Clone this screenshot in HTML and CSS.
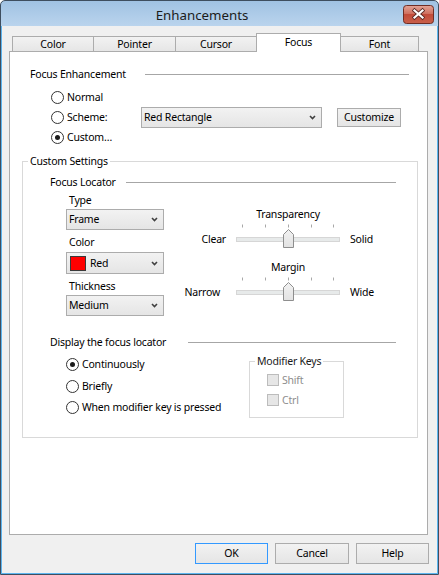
FILE: index.html
```html
<!DOCTYPE html>
<html>
<head>
<meta charset="utf-8">
<title>Enhancements</title>
<link rel="stylesheet" href="styles.css">
</head>
<body>
<div class="window">
  <div class="titlebar">
    <div class="title">Enhancements</div>
    <div class="close">
      <svg width="31" height="19" viewBox="0 0 31 19">
        <defs>
          <linearGradient id="cg" x1="0" y1="0" x2="0" y2="1">
            <stop offset="0" stop-color="#e3a497"/>
            <stop offset="0.45" stop-color="#d0705f"/>
            <stop offset="0.5" stop-color="#c24b39"/>
            <stop offset="1" stop-color="#c9604b"/>
          </linearGradient>
        </defs>
        <rect x="0.5" y="0.5" width="30" height="18" rx="3" fill="url(#cg)" stroke="#6e2d25"/>
        <path d="M11.5 5.5 L19.5 12.5 M19.5 5.5 L11.5 12.5" stroke="#5a2a24" stroke-width="3.8" stroke-linecap="square"/>
        <path d="M11.5 5.5 L19.5 12.5 M19.5 5.5 L11.5 12.5" stroke="#ffffff" stroke-width="2.2" stroke-linecap="square"/>
      </svg>
    </div>
  </div>
  <div class="client">
    <div class="tabs">
      <div class="tab t-color">Color</div>
      <div class="tab t-pointer">Pointer</div>
      <div class="tab t-cursor">Cursor</div>
      <div class="tab t-focus active">Focus</div>
      <div class="tab t-font">Font</div>
    </div>
    <div class="panel">
      <div class="hdr hdr-fe"><span>Focus Enhancement</span><span class="rule"></span></div>
      <div class="fe-rows">
        <div class="fe-row">
          <div class="opt fe-opt"><span class="radio"></span><span>Normal</span></div>
        </div>
        <div class="fe-row">
          <div class="opt fe-opt"><span class="radio"></span><span>Scheme:</span></div>
          <div class="combo combo-scheme"><span class="combo-text">Red Rectangle</span><svg class="chev" width="7" height="5" viewBox="0 0 7 5"><path d="M1 1 L3.5 3.5 L6 1" fill="none" stroke="#404040" stroke-width="1.6"/></svg></div>
          <div class="btn btn-customize">Customize</div>
        </div>
        <div class="fe-row">
          <div class="opt fe-opt"><span class="radio on"></span><span>Custom…</span></div>
        </div>
      </div>

      <fieldset class="group cs">
        <legend>Custom Settings</legend>
        <div class="cs-inner">
          <div class="hdr hdr-fl"><span>Focus Locator</span><span class="rule"></span></div>
          <div class="loc-cols">
            <div class="loc-left">
              <div class="flbl">Type</div>
              <div class="combo combo-sm"><span class="combo-text">Frame</span><svg class="chev" width="7" height="5" viewBox="0 0 7 5"><path d="M1 1 L3.5 3.5 L6 1" fill="none" stroke="#404040" stroke-width="1.6"/></svg></div>
              <div class="flbl flbl-next">Color</div>
              <div class="combo combo-color"><span class="swatch"></span><span class="combo-text">Red</span><svg class="chev" width="7" height="5" viewBox="0 0 7 5"><path d="M1 1 L3.5 3.5 L6 1" fill="none" stroke="#404040" stroke-width="1.6"/></svg></div>
              <div class="flbl flbl-next">Thickness</div>
              <div class="combo combo-sm"><span class="combo-text">Medium</span><svg class="chev" width="7" height="5" viewBox="0 0 7 5"><path d="M1 1 L3.5 3.5 L6 1" fill="none" stroke="#404040" stroke-width="1.6"/></svg></div>
            </div>
            <div class="loc-right">
              <div class="slider">
                <div class="s-title">Transparency</div>
                <div class="s-left">Clear</div>
                <svg class="s-svg" width="104" height="26" viewBox="0 0 104 26">
                  <defs>
                    <linearGradient id="tg1" x1="0" y1="0" x2="0" y2="1">
                      <stop offset="0" stop-color="#f2f2f2"/>
                      <stop offset="1" stop-color="#e2e2e2"/>
                    </linearGradient>
                  </defs>
                  <path d="M6.5 2.5v3M29.5 2.5v3M52.5 2.5v3M75.5 2.5v3M97.5 2.5v3" stroke="#a8a8a8"/>
                  <rect x="0.5" y="15.5" width="103" height="4" fill="#e7eaea" stroke="#d6d6d6"/>
                  <path d="M47.5 25.5 V12.5 L52.5 7.5 L57.5 12.5 V25.5 Z" fill="url(#tg1)" stroke="#8e8e8e"/>
                </svg>
                <div class="s-right">Solid</div>
              </div>
              <div class="slider">
                <div class="s-title">Margin</div>
                <div class="s-left narrow">Narrow</div>
                <svg class="s-svg" width="104" height="26" viewBox="0 0 104 26">
                  <defs>
                    <linearGradient id="tg2" x1="0" y1="0" x2="0" y2="1">
                      <stop offset="0" stop-color="#f2f2f2"/>
                      <stop offset="1" stop-color="#e2e2e2"/>
                    </linearGradient>
                  </defs>
                  <path d="M6.5 2.5v3M29.5 2.5v3M52.5 2.5v3M75.5 2.5v3M97.5 2.5v3" stroke="#a8a8a8"/>
                  <rect x="0.5" y="15.5" width="103" height="4" fill="#e7eaea" stroke="#d6d6d6"/>
                  <path d="M47.5 25.5 V12.5 L52.5 7.5 L57.5 12.5 V25.5 Z" fill="url(#tg2)" stroke="#8e8e8e"/>
                </svg>
                <div class="s-right">Wide</div>
              </div>
            </div>
          </div>

          <div class="hdr hdr-dl"><span>Display the focus locator</span><span class="rule"></span></div>
          <div class="dl-row">
            <div class="dl-opts">
              <div class="opt dl-opt"><span class="radio on"></span><span>Continuously</span></div>
              <div class="opt dl-opt dl-mid"><span class="radio"></span><span>Briefly</span></div>
              <div class="opt dl-opt"><span class="radio"></span><span>When modifier key is pressed</span></div>
            </div>
            <fieldset class="group mk">
              <legend>Modifier Keys</legend>
              <div class="mk-inner">
                <div class="chk-row"><span class="chk"></span><span>Shift</span></div>
                <div class="chk-row"><span class="chk"></span><span>Ctrl</span></div>
              </div>
            </fieldset>
          </div>
        </div>
      </fieldset>
    </div>
    <div class="buttons">
      <div class="btn dlg-btn default">OK</div>
      <div class="btn dlg-btn cancel">Cancel</div>
      <div class="btn dlg-btn">Help</div>
    </div>
  </div>
</div>
</body>
</html>
```

FILE: styles.css
```css
* { box-sizing: border-box; }

html, body {
  margin: 0;
  padding: 0;
  background: #ffffff;
}

body {
  font-family: "Noto Sans", "Open Sans", sans-serif;
  font-size: 10.5px;
  letter-spacing: -0.2px;
  line-height: 15px;
  color: #000000;
}

.window {
  width: 439px;
  height: 575px;
  border: 1px solid #3e4e5f;
  border-radius: 5px 5px 0 0;
  background: linear-gradient(#a0c2e3, #bad4ed 25px, #bad4ed);
  display: flex;
  flex-direction: column;
  overflow: hidden;
}

.titlebar {
  height: 25px;
  flex: none;
  display: flex;
  align-items: flex-start;
}

.title {
  flex: 1;
  text-align: center;
  font-size: 13.3px;
  letter-spacing: 0;
  line-height: 18px;
  padding-top: 5px;
  color: #1b1b1b;
}

.close {
  width: 31px;
  height: 19px;
  margin-top: 4px;
  margin-right: 4px;
  display: flex;
}

.client {
  flex: 1;
  background: #f0f0f0;
  border: 1px solid #5db5ef;
  border-top: none;
  display: flex;
  flex-direction: column;
}

/* tabs */
.tabs {
  height: 25px;
  flex: none;
  display: flex;
  align-items: flex-end;
  padding-left: 10px;
}

.tab {
  height: 15px;
  border: 1px solid #acacac;
  border-bottom: none;
  background: linear-gradient(#f2f2f2, #e6e6e6);
  display: flex;
  align-items: center;
  justify-content: center;
  margin-left: -1px;
}

.t-color { width: 82px; margin-left: 0; }
.t-pointer { width: 83px; }
.t-cursor { width: 82px; }
.t-focus { width: 85px; }
.t-font { width: 79px; }

.tab.active {
  height: 19px;
  margin-bottom: -1px;
  background: #ffffff;
  position: relative;
  z-index: 1;
  padding-bottom: 1px;
}

.panel {
  flex: none;
  height: 484px;
  margin: 0 9px 0 7px;
  border: 1px solid #acacac;
  background: #ffffff;
}

/* section headers */
.hdr {
  display: grid;
  align-items: center;
  height: 15px;
  white-space: nowrap;
}

.rule {
  display: block;
  height: 0;
  border-top: 1px solid #a6a6a6;
}

.hdr-fe {
  grid-template-columns: 115px 1fr;
  margin: 15px 18px 0 20px;
}

.hdr-fl { grid-template-columns: 76px 1fr; }
.hdr-dl { grid-template-columns: 138px 1fr; margin-top: 19px; }

/* option rows */
.fe-rows { margin: 5px 0 0 41px; }

.fe-row {
  height: 20px;
  display: flex;
  align-items: center;
}

.opt {
  display: flex;
  align-items: center;
  white-space: nowrap;
}

.fe-opt { width: 90px; }

.radio {
  flex: none;
  width: 13px;
  height: 13px;
  border: 1px solid #333333;
  border-radius: 50%;
  background: #ffffff;
  margin-right: 3px;
  display: flex;
  align-items: center;
  justify-content: center;
}

.radio.on::after {
  content: "";
  width: 5px;
  height: 5px;
  border-radius: 50%;
  background: #1a1a1a;
}

/* combos and buttons */
.combo {
  flex: none;
  display: flex;
  align-items: center;
  border: 1px solid #acacac;
  background: linear-gradient(#f2f2f2, #e5e5e5);
  padding: 0 5px 0 2px;
  white-space: nowrap;
}

.combo-text { flex: 1; }
.chev { flex: none; }

.combo-scheme { width: 181px; height: 21px; }
.combo-sm { width: 98px; height: 21px; margin-top: 1px; }

.combo-color {
  width: 98px;
  height: 22px;
  margin-top: 2px;
  padding-left: 3px;
}

.swatch {
  flex: none;
  width: 16px;
  height: 15px;
  background: #ff0000;
  border: 1px solid #3a3a3a;
  margin-right: 4px;
}

.btn {
  display: flex;
  align-items: center;
  justify-content: center;
  border: 1px solid #acacac;
  background: linear-gradient(#f2f2f2, #e5e5e5);
  white-space: nowrap;
}

.btn-customize {
  width: 64px;
  height: 19px;
  margin-left: 15px;
}

/* group boxes */
fieldset.group {
  margin: 0;
  padding: 0;
  border: 1px solid #d9d9d9;
  min-width: 0;
}

fieldset.group legend {
  padding: 0 2px;
  margin-left: 5px;
  line-height: 15px;
}

fieldset.cs { margin: 7px 9px 0 12px; }

.cs-inner { padding: 6px 21px 19px 27px; }

.loc-cols {
  display: flex;
  margin: 3px 0 0 16px;
}

.loc-left { width: 98px; flex: none; }

.flbl { padding-left: 3px; height: 15px; }
.flbl-next { margin-top: 5px; }

.loc-right {
  margin-left: 2px;
  padding-top: 13.5px;
}

.slider {
  display: grid;
  grid-template-columns: 60px 104px auto;
  grid-template-rows: 15px 26px;
  column-gap: 10px;
  margin-bottom: 12px;
  white-space: nowrap;
}

.s-title { grid-column: 2; grid-row: 1; text-align: center; }
.s-left { grid-column: 1; grid-row: 2; text-align: right; margin-top: 10px; }
.s-left.narrow { margin-right: 6px; }
.s-svg { grid-column: 2; grid-row: 2; display: block; }
.s-right { grid-column: 3; grid-row: 2; margin-top: 10px; }

.dl-row {
  display: flex;
  align-items: flex-start;
  margin: 4px 0 0 16px;
}

.dl-opts { width: 183px; flex: none; }
.dl-opt { height: 21px; }
.dl-mid { height: 22px; }

fieldset.mk { width: 95px; flex: none; }
fieldset.mk legend { color: #1a1a1a; }

.mk-inner { padding: 1px 0 7px 17px; }

.chk-row {
  height: 20px;
  display: flex;
  align-items: center;
  color: #8d8d8d;
}

.chk {
  flex: none;
  width: 12px;
  height: 12px;
  border: 1px solid #bcbcbc;
  background: #e6e6e6;
  margin-right: 3px;
}

/* dialog buttons */
.buttons {
  display: flex;
  justify-content: flex-end;
  gap: 7px;
  margin-top: 8px;
  padding-right: 8px;
}

.dlg-btn { width: 73px; height: 21px; }
.dlg-btn.cancel { width: 74px; }
.dlg-btn.default { border-color: #3399ff; }
```
